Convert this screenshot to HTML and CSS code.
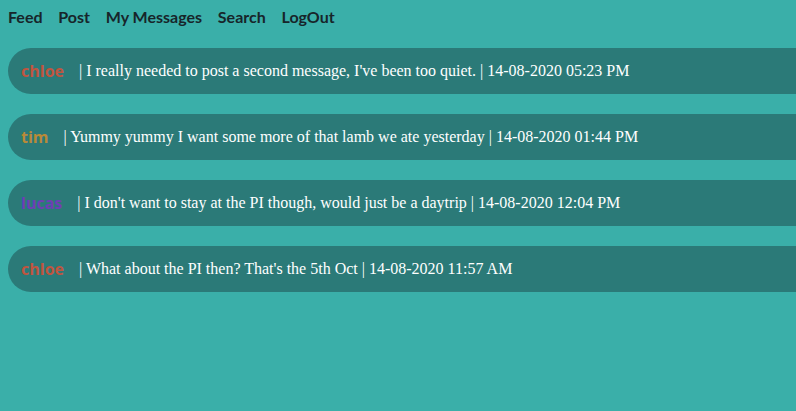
FILE: index.html
```html
<!DOCTYPE html>
<html>
<head>
<meta charset="utf-8">
<link rel="stylesheet" href="styles.css">
</head>
<body>
<nav class="nav">
  <a class="nav-link" href="#">Feed</a>
  <a class="nav-link" href="#">Post</a>
  <a class="nav-link" href="#">My Messages</a>
  <a class="nav-link" href="#">Search</a>
  <a class="nav-link" href="#">LogOut</a>
</nav>
<main class="feed">
  <div class="msg"><span class="user user-chloe">chloe</span><span class="text">| I really needed to post a second message, I've been too quiet. | 14-08-2020 05:23 PM</span></div>
  <div class="msg"><span class="user user-tim">tim</span><span class="text">| Yummy yummy I want some more of that lamb we ate yesterday | 14-08-2020 01:44 PM</span></div>
  <div class="msg"><span class="user user-lucas">lucas</span><span class="text">| I don't want to stay at the PI though, would just be a daytrip | 14-08-2020 12:04 PM</span></div>
  <div class="msg"><span class="user user-chloe">chloe</span><span class="text">| What about the PI then? That's the 5th Oct | 14-08-2020 11:57 AM</span></div>
</main>
</body>
</html>
```
FILE: styles.css
```css
html, body {
  margin: 0;
  padding: 0;
  background: #3aafa9;
  height: 100%;
}
body {
  padding-left: 8px;
}
.nav {
  display: flex;
  gap: 15.75px;
  padding-top: 7px;
  height: 48px;
  box-sizing: border-box;
}
.nav-link {
  font-family: Lato, "Open Sans", sans-serif;
  font-weight: 700;
  font-size: 16px;
  color: #17252a;
  text-decoration: none;
  line-height: 20px;
}
.feed {
  display: flex;
  flex-direction: column;
  gap: 20px;
}
.msg {
  display: flex;
  align-items: center;
  height: 46px;
  background: #2b7a78;
  border-radius: 23px 0 0 23px;
  padding-left: 13px;
}
.user {
  font-family: "Open Sans", sans-serif;
  font-weight: 700;
  font-size: 16px;
  margin-right: 15px;
}
.user-chloe { color: #c0553f; }
.user-tim { color: #b98a38; }
.user-lucas { color: #6e3fb5; }
.text {
  font-family: "Liberation Serif", serif;
  font-size: 16px;
  color: #feffff;
}
```
